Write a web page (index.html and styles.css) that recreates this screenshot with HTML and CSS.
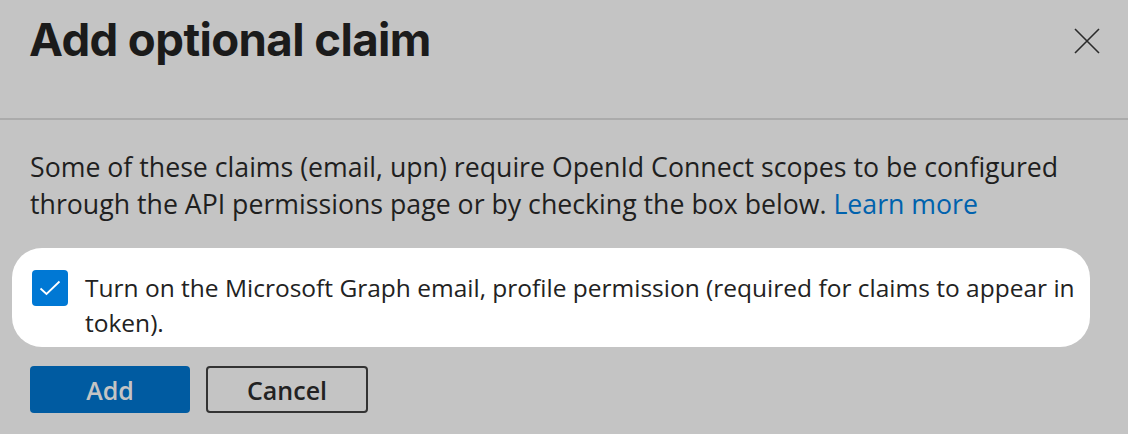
FILE: index.html
```html
<!DOCTYPE html>
<html lang="en">
<head>
<meta charset="utf-8">
<title>Add optional claim</title>
<link rel="stylesheet" href="styles.css">
</head>
<body>
<div class="panel">
  <header class="header">
    <h1 class="title">Add optional claim</h1>
    <button class="close" aria-label="Close">
      <svg width="26" height="26" viewBox="0 0 26 26"><path d="M1 1 L25 25 M25 1 L1 25" stroke="#2b2b2b" stroke-width="1.6" fill="none"/></svg>
    </button>
  </header>
  <div class="content">
    <p class="desc">Some of these claims (email, upn) require OpenId Connect scopes to be configured through the API permissions page or by checking the box below. <a class="link" href="#">Learn more</a></p>
    <div class="highlight">
      <span class="checkbox">
        <svg width="22" height="16" viewBox="0 0 22 16"><path d="M1.5 8.5 L7.5 14 L20.5 1.5" stroke="#fff" stroke-width="1.8" fill="none"/></svg>
      </span>
      <span class="label">Turn on the Microsoft Graph email, profile permission (required for claims to appear in token).</span>
    </div>
    <div class="actions">
      <button class="btn primary">Add</button>
      <button class="btn secondary">Cancel</button>
    </div>
  </div>
</div>
</body>
</html>
```
FILE: styles.css
```css
html, body {
  margin: 0;
  padding: 0;
  background: #c4c4c4;
  width: 1128px;
  height: 434px;
  overflow: hidden;
}
.panel {
  font-family: "Open Sans", "Noto Sans", sans-serif;
  color: #1f1f1f;
}
.header {
  height: 120px;
  border-bottom: 2px solid #ababab;
  display: flex;
  justify-content: space-between;
  align-items: flex-start;
  padding: 0 28px 0 29px;
  box-sizing: border-box;
}
.title {
  margin: 14px 0 0 0;
  font-family: Inter, "Noto Sans", sans-serif;
  font-weight: 700;
  font-size: 45.6px;
  line-height: 52px;
  color: #1b1b1b;
  letter-spacing: -0.6px;
}
.close {
  background: none;
  border: 0;
  padding: 0;
  margin-top: 28px;
  width: 26px;
  height: 26px;
}
.close svg { display: block; }
.content {
  padding: 28px 0 0 0;
}
.desc {
  margin: 0 30px;
  font-size: 26.7px;
  line-height: 37px;
  color: #1f1f1f;
}
.link {
  color: #0062ad;
  text-decoration: none;
}
.highlight {
  margin: 26px 0 0 12px;
  width: 1078px;
  box-sizing: border-box;
  background: #fff;
  border-radius: 30px;
  display: flex;
  align-items: flex-start;
  padding: 22px 6px 16px 20px;
  height: 99px;
}
.checkbox {
  flex: none;
  width: 36px;
  height: 36px;
  border-radius: 4px;
  background: #0078d4;
  display: flex;
  align-items: center;
  justify-content: center;
  margin-right: 17px;
}
.checkbox svg { display: block; }
.label {
  font-size: 24.5px;
  line-height: 35px;
  color: #222;
  margin-top: 0;
}
.actions {
  display: flex;
  gap: 16px;
  margin: 19px 0 0 30px;
}
.btn {
  height: 47px;
  border-radius: 4px;
  font-family: "Open Sans", "Noto Sans", sans-serif;
  font-size: 25px;
  font-weight: 600;
  box-sizing: border-box;
  padding: 0;
}
.primary {
  width: 160px;
  background: #005ba1;
  color: #c4c4c4;
  border: 0;
}
.secondary {
  width: 162px;
  background: transparent;
  color: #222;
  border: 2px solid #333;
}
```
